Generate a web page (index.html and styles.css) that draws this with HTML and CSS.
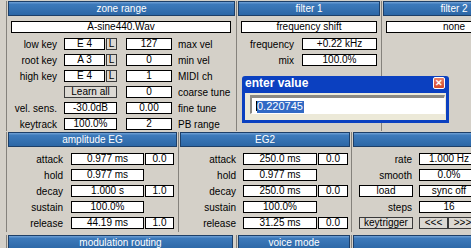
FILE: index.html
```html
<!DOCTYPE html>
<html lang="en">
<head>
    <meta charset="UTF-8">
    <title>Sampler zone editor</title>
    <link rel="stylesheet" href="styles.css">
</head>
<body>
    <div class="app">
        <div class="section top">
            <div class="panel zone">
                <div class="hdr">zone range</div>
                <div class="box file">A-sine440.Wav</div>
                <div class="rows">
                    <div class="row">
                        <span class="lbl zl">low key</span>
                        <span class="box key">E 4</span><span class="btn lb">L</span>
                        <span class="box val">127</span><span class="rl">max vel</span>
                    </div>
                    <div class="row">
                        <span class="lbl zl">root key</span>
                        <span class="box key">A 3</span><span class="btn lb">L</span>
                        <span class="box val">0</span><span class="rl">min vel</span>
                    </div>
                    <div class="row">
                        <span class="lbl zl">high key</span>
                        <span class="box key">E 4</span><span class="btn lb">L</span>
                        <span class="box val">1</span><span class="rl">MIDI ch</span>
                    </div>
                    <div class="row">
                        <span class="lbl zl"></span>
                        <span class="btn wide">Learn all</span>
                        <span class="box val">0</span><span class="rl">coarse tune</span>
                    </div>
                    <div class="row">
                        <span class="lbl zl">vel. sens.</span>
                        <span class="box wide">-30.0dB</span>
                        <span class="box val">0.00</span><span class="rl">fine tune</span>
                    </div>
                    <div class="row">
                        <span class="lbl zl">keytrack</span>
                        <span class="box wide">100.0%</span>
                        <span class="box val">2</span><span class="rl">PB range</span>
                    </div>
                </div>
            </div>
            <div class="panel filter">
                <div class="hdr">filter 1</div>
                <div class="box file">frequency shift</div>
                <div class="rows">
                    <div class="row">
                        <span class="lbl fl">frequency</span>
                        <span class="box fv">+0.22 kHz</span>
                    </div>
                    <div class="row">
                        <span class="lbl fl">mix</span>
                        <span class="box fv">100.0%</span>
                    </div>
                </div>
            </div>
            <div class="panel filter">
                <div class="hdr">filter 2</div>
                <div class="box file">none</div>
            </div>
        </div>

        <div class="section mid">
            <div class="panel amp">
                <div class="hdr">amplitude EG</div>
                <div class="rows eg">
                    <div class="row"><span class="lbl el">attack</span><span class="box e1">0.977 ms</span><span class="box e2">0.0</span></div>
                    <div class="row"><span class="lbl el">hold</span><span class="box e1">0.977 ms</span></div>
                    <div class="row"><span class="lbl el">decay</span><span class="box e1">1.000 s</span><span class="box e2">1.0</span></div>
                    <div class="row"><span class="lbl el">sustain</span><span class="box e1">100.0%</span></div>
                    <div class="row"><span class="lbl el">release</span><span class="box e1">44.19 ms</span><span class="box e2">1.0</span></div>
                </div>
            </div>
            <div class="panel eg2">
                <div class="hdr">EG2</div>
                <div class="rows eg">
                    <div class="row"><span class="lbl el">attack</span><span class="box e1">250.0 ms</span><span class="box e2">0.0</span></div>
                    <div class="row"><span class="lbl el">hold</span><span class="box e1">0.977 ms</span></div>
                    <div class="row"><span class="lbl el">decay</span><span class="box e1">250.0 ms</span><span class="box e2">0.0</span></div>
                    <div class="row"><span class="lbl el">sustain</span><span class="box e1">100.0%</span></div>
                    <div class="row"><span class="lbl el">release</span><span class="box e1">31.25 ms</span><span class="box e2">0.0</span></div>
                </div>
            </div>
            <div class="panel lfo">
                <div class="hdr"></div>
                <div class="rows eg">
                    <div class="row"><span class="lbl ll">rate</span><span class="box lv">1.000 Hz</span></div>
                    <div class="row"><span class="lbl ll">smooth</span><span class="box lv">0.0%</span></div>
                    <div class="row"><span class="box lw">load</span><span class="box lv">sync off</span></div>
                    <div class="row"><span class="lbl ll">steps</span><span class="box lv">16</span></div>
                    <div class="row"><span class="btn lw">keytrigger</span><span class="btn arr">&lt;&lt;&lt;</span><span class="btn arr">&gt;&gt;&gt;</span></div>
                </div>
            </div>
        </div>

        <div class="section bottom">
            <div class="panel mod"><div class="hdr">modulation routing</div></div>
            <div class="panel voice"><div class="hdr">voice mode</div></div>
            <div class="panel rest"><div class="hdr"></div></div>
        </div>

        <div class="dialog">
            <div class="dlg-title">
                <span>enter value</span>
                <span class="dlg-close">&#x2715;</span>
            </div>
            <div class="dlg-body">
                <div class="dlg-input"><span class="caret"></span><span class="sel">0.220745</span></div>
            </div>
        </div>
    </div>
</body>
</html>
```

FILE: styles.css
```css
* {
    box-sizing: border-box;
}
body {
    margin: 0;
    background: #d4d0c8;
    font-family: "Liberation Sans", Arial, sans-serif;
    font-size: 10px;
    color: #000;
    overflow: hidden;
}
.app {
    position: relative;
    width: 471px;
    height: 248px;
    overflow: hidden;
}
.section {
    display: flex;
    padding-left: 6px;
}
.section.top {
    height: 131px;
    padding-top: 1px;
}
.section.mid {
    height: 101px;
    padding-top: 1px;
}
.section.bottom {
    height: 16px;
    padding-top: 3px;
}
.panel {
    flex: none;
    border-left: 1px solid #85827c;
    padding: 0 1px;
}
.zone { width: 230px; }
.filter { width: 145px; }
.amp { width: 172px; }
.eg2 { width: 173px; }
.lfo { width: 170px; }
.mod { width: 230px; padding-right: 3px; }
.voice { width: 115px; }
.rest { width: 150px; }

.hdr {
    height: 15px;
    border: 1px solid #1d3f68;
    background: linear-gradient(to bottom, #72a2d6 0%, #3d7abb 18%, #2c67a6 100%);
    color: #fff;
    text-align: center;
    line-height: 13px;
    white-space: nowrap;
}

.box, .btn {
    flex: none;
    display: block;
    height: 12px;
    border: 1px solid #000;
    background: #fff;
    text-align: center;
    line-height: 10px;
    white-space: nowrap;
    overflow: hidden;
}
.btn {
    background: #dcd9d3;
    border-color: #3a3a3a;
}
.file {
    margin: 5px 3px 0 3px;
}
.zone .file {
    margin-right: 4px;
}
.rows {
    margin-top: 3px;
}
.rows.eg {
    margin-top: 4px;
}
.row {
    display: flex;
    align-items: center;
    height: 16px;
}
.lbl {
    flex: none;
    text-align: right;
    white-space: nowrap;
}

/* zone range */
.zl { width: 49px; margin-right: 7px; }
.key { width: 41px; }
.lb { width: 11px; margin-left: 1px; }
.wide { width: 53px; }
.val { width: 46px; margin-left: 9px; }
.rl { margin-left: 6px; white-space: nowrap; }

/* filter */
.fl { width: 56px; margin-right: 8px; }
.fv { width: 75px; }

/* envelopes */
.amp .el { width: 55px; margin-right: 8px; }
.amp .e1 { width: 73px; }
.amp .e2 { width: 29px; margin-left: 1px; }
.eg2 .el { width: 56px; margin-right: 7px; }
.eg2 .e1 { width: 74px; }
.eg2 .e2 { width: 30px; margin-left: 1px; }

/* lfo */
.ll { width: 59px; margin-right: 7px; }
.lv { width: 60px; }
.lw { width: 54px; margin-left: 6px; margin-right: 6px; }
.arr { width: 29px; }

/* enter value dialog */
.dialog {
    position: absolute;
    left: 242px;
    top: 76px;
    width: 207px;
    height: 47px;
    padding: 0 3px 3px;
    background: #0b40c0;
    border-radius: 3px 3px 0 0;
}
.dlg-title {
    height: 17px;
    display: flex;
    justify-content: space-between;
    align-items: flex-start;
    color: #fff;
    font-weight: bold;
    font-size: 12px;
    line-height: 12px;
    padding-top: 1px;
}
.dlg-close {
    width: 12px;
    height: 12px;
    margin-right: 1px;
    border: 1px solid #fff;
    border-radius: 2px;
    background: linear-gradient(to bottom, #e8806a, #d2482a);
    color: #fff;
    font-size: 9px;
    line-height: 10px;
    text-align: center;
}
.dlg-body {
    height: 27px;
    background: #ece9d8;
    padding: 2px 1px 0 5px;
}
.dlg-input {
    height: 19px;
    background: #fff;
    border-top: 3px solid #8c8a84;
    border-left: 2px solid #8c8a84;
    border-right: 1px solid #fff;
    border-bottom: 1px solid #fff;
    padding: 3px 0 0 4px;
    display: flex;
    font-size: 11px;
    line-height: 10px;
}
.caret {
    width: 1px;
    height: 10px;
    background: #000;
}
.sel {
    background: #316ac5;
    color: #fff;
    padding-right: 1px;
}
```
